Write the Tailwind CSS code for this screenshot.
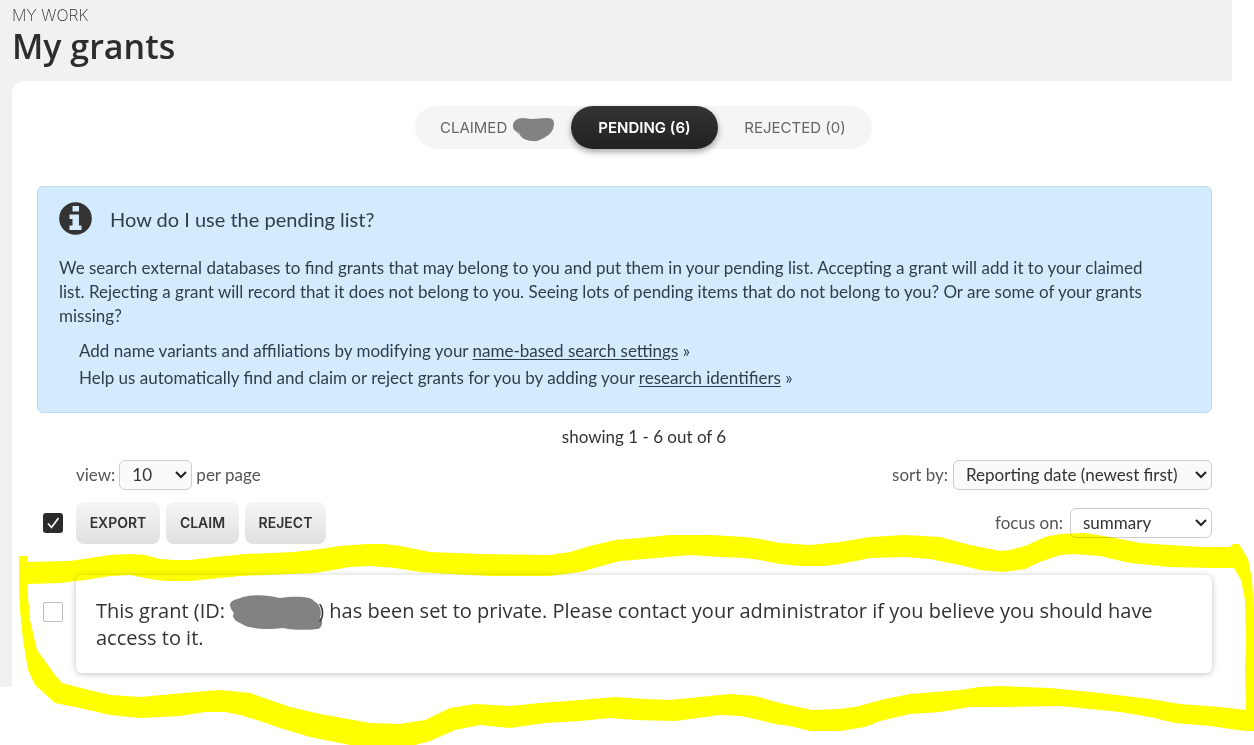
<!DOCTYPE html>
<html lang="en">
<head>
<meta charset="utf-8">
<meta name="viewport" content="width=device-width, initial-scale=1">
<title>My grants</title>
<script src="https://cdn.jsdelivr.net/npm/@tailwindcss/browser@4"></script>
</head>
<body class="bg-white text-[#333] font-['Lato',sans-serif] text-[17px] leading-6">
<div class="relative overflow-hidden pb-[58px]">
  <div class="mr-[22px] bg-[#f1f1f1]">
    <header class="h-[81px] pl-3 pt-1">
      <p class="font-['Inter',sans-serif] text-[16px] font-extralight leading-[22px]">MY WORK</p>
      <h1 class="font-['Open_Sans',sans-serif] text-[34px] font-semibold leading-[40px] text-[#2d2d2d]">My grants</h1>
    </header>

    <main class="ml-3 rounded-tl-xl bg-white pt-[25px] pr-5 pb-[14px] pl-[25px]">
      <nav class="flex justify-center pl-[38px]" aria-label="Grant lists">
        <div class="flex h-[43px] rounded-full bg-[#f5f5f5] font-['Inter',sans-serif] text-[15px]">
          <button type="button" class="flex w-[156px] items-center gap-[6px] pl-[25px] text-[#666]">CLAIMED
            <svg class="mt-1 h-6 w-[41px]" viewBox="0 0 41 24" fill="#828282" aria-hidden="true"><path d="M0 8C0 3 4 0 10 0L18 1L34 0C40 0 41 3 41 5C41 10 39 15 34 18C29 21 24 24 21 23C15 23 9 21 7 17L5 13L6 17L4 14C1 12 0 11 0 8Z"/></svg>
          </button>
          <button type="button" aria-current="page" class="w-[147px] rounded-full bg-linear-to-b from-[#333] to-[#222] text-center font-semibold text-white shadow-[0_3px_6px_rgba(0,0,0,0.35)]">PENDING (6)</button>
          <button type="button" class="w-[154px] text-center text-[#666]">REJECTED (0)</button>
        </div>
      </nav>

      <section class="mt-[37px] rounded-md border border-[#bddcf0] bg-[#d3ebfd] pt-[15px] pr-[60px] pb-[21px] pl-[21px] text-[#2f3e4b]">
        <div class="flex items-center gap-[18px]">
          <svg class="h-[33px] w-[33px]" viewBox="0 0 33 33" aria-hidden="true"><circle cx="16.500" cy="16.500" r="16.300" fill="#333"/><path fill="#d3ebfd" d="M13.500 4H20V9.500H13.500ZM10.500 12.500H20V23.500H22.500V28H10.500V23.500H13.500V17H10.500Z"/></svg>
          <h2 class="text-[20px] leading-8">How do I use the pending list?</h2>
        </div>
        <p class="mt-[21px]">We search external databases to find grants that may belong to you and put them in your pending list. Accepting a grant will add it to your claimed list. Rejecting a grant will record that it does not belong to you. Seeing lots of pending items that do not belong to you? Or are some of your grants missing?</p>
        <ul class="mt-[9px] pl-5 leading-[27px]">
          <li>Add name variants and affiliations by modifying your <a href="#" class="underline underline-offset-2">name-based search settings</a> »</li>
          <li>Help us automatically find and claim or reject grants for you by adding your <a href="#" class="underline underline-offset-2">research identifiers</a> »</li>
        </ul>
      </section>

      <p class="mt-3 pl-[39px] text-center">showing 1 - 6 out of 6</p>

      <div class="mt-[11px] flex h-[30px] items-center justify-between pl-[39px] text-[#555]">
        <div class="flex items-center gap-1">
          <label for="per-page">view:</label>
          <span class="relative">
            <select id="per-page" class="block h-[30px] w-[73px] appearance-none rounded-md border border-[#ccc] bg-[#fafafa] pl-3 text-[#333]"><option>10</option></select>
            <svg class="pointer-events-none absolute top-[11px] right-[5px] h-2 w-3" viewBox="0 0 12 8" fill="none" stroke="#222" stroke-width="2" aria-hidden="true"><path d="M1 1L6 6L11 1"/></svg>
          </span>
          <span>per page</span>
        </div>
        <div class="flex items-center gap-[5px]">
          <label for="sort">sort by:</label>
          <span class="relative">
            <select id="sort" class="block h-[30px] w-[259px] appearance-none rounded-md border border-[#ccc] bg-[#fafafa] pl-3 text-[#333]"><option>Reporting date (newest first)</option></select>
            <svg class="pointer-events-none absolute top-[11px] right-[5px] h-2 w-3" viewBox="0 0 12 8" fill="none" stroke="#222" stroke-width="2" aria-hidden="true"><path d="M1 1L6 6L11 1"/></svg>
          </span>
        </div>
      </div>

      <div class="mt-3 flex h-[42px] items-center justify-between pl-[6px] text-[#555]">
        <div class="flex items-center">
          <span class="relative mr-[13px]">
            <input type="checkbox" checked aria-label="Select all grants" class="block h-5 w-5 appearance-none rounded-[3px] bg-[#2b2b2b]">
            <svg class="pointer-events-none absolute inset-0 h-5 w-5" viewBox="0 0 20 20" fill="none" stroke="#fff" stroke-width="1.700" aria-hidden="true"><path d="M5 10.500L8.500 14.500L15.500 5"/></svg>
          </span>
          <div class="flex gap-[6px] font-['Inter',sans-serif] text-[14px] font-semibold text-[#333]">
            <button type="button" class="h-[42px] w-[84px] rounded-lg bg-linear-to-b from-[#f6f6f6] to-[#e0e0e0]">EXPORT</button>
            <button type="button" class="h-[42px] w-[73px] rounded-lg bg-linear-to-b from-[#f6f6f6] to-[#e0e0e0]">CLAIM</button>
            <button type="button" class="h-[42px] w-[81px] rounded-lg bg-linear-to-b from-[#f6f6f6] to-[#e0e0e0]">REJECT</button>
          </div>
        </div>
        <div class="flex items-center gap-[7px]">
          <label for="focus">focus on:</label>
          <span class="relative">
            <select id="focus" class="block h-[30px] w-[142px] appearance-none rounded-md border border-[#ccc] bg-white pl-3 text-[#333]"><option>summary</option></select>
            <svg class="pointer-events-none absolute top-[11px] right-[5px] h-2 w-3" viewBox="0 0 12 8" fill="none" stroke="#222" stroke-width="2" aria-hidden="true"><path d="M1 1L6 6L11 1"/></svg>
          </span>
        </div>
      </div>

      <div class="mt-[31px] flex gap-[13px] pl-[6px]">
        <input type="checkbox" aria-label="Select this grant" class="mt-[27px] block h-5 w-5 shrink-0 appearance-none rounded-[2px] border border-[#bbb] bg-white">
        <article class="grow rounded-md bg-white px-5 pt-[22px] pb-[22px] font-['Open_Sans',sans-serif] text-[20px] leading-[27px] shadow-[0_1px_6px_rgba(0,0,0,0.25)]">
          <p>This grant (ID: <svg class="-my-2 mr-[-4px] inline-block h-[35px] w-[92px] align-middle" viewBox="0 0 92 35" fill="#828282" aria-hidden="true"><path d="M0 9C1 5 8 4 13 2C25 -1 38 0 50 3C64 1 81 1 84 6C91 10 92 17 90 23C94 25 92 34 87 34C73 36 57 34 53 33C38 35 19 34 12 29C5 26 1 22 4 18C1 15 0 12 0 9Z"/></svg>) has been set to private. Please contact your administrator if you believe you should have access to it.</p>
        </article>
      </div>
    </main>
  </div>

  <!-- Highlighter stroke around the private grant -->
  <svg class="pointer-events-none absolute top-0 left-0 h-[745px] w-full mix-blend-multiply" viewBox="0 0 1254 745" preserveAspectRatio="none" fill="#ff0" fill-rule="evenodd" aria-hidden="true">
    <path d="M19 556L27 556L27 562L70 561L90 558L110 555L130 554L145 555L160 559L175 560L190 560L215 557L245 554L295 552L320 549L340 546L367 544L385 544L400 546L430 552L480 554L550 555L570 552L590 546L615 540L640 538L670 535L710 535L745 537L760 539L780 543L810 545L840 542L870 537L905 535L940 537L970 545L1000 551L1010 550L1025 546L1045 537L1060 534L1085 533L1110 537L1140 543L1170 545L1200 547L1230 547L1233 544L1239 544L1248 559L1252 580L1254 610L1254 731L1245 731L1210 726L1175 723L1150 717L1120 712L1060 706L1000 707L970 707L940 712L910 714L880 721L865 727L840 731L810 731L790 726L775 724L755 719L740 716L720 715L675 721L635 720L610 718L580 721L545 723L510 728L480 725L455 730L430 741L415 745L350 745L310 737L280 728L260 721L240 715L225 712L205 712L180 716L140 718L110 715L80 708L55 703L35 685L28 670L23 640L20 610L19 590Z
    M27 584L60 583L85 580L110 576L130 575L150 579L165 581L190 581L240 576L315 573L350 567L370 566L395 568L420 572L450 574L490 576L550 576L580 572L620 561L645 559L690 555L720 557L745 558L760 560L780 564L800 566L825 566L840 564L870 558L905 557L930 559L960 565L980 570L1003 572L1025 569L1040 562L1060 555L1072 554L1100 556L1130 563L1170 567L1210 568L1234 568L1241 580L1245 600L1246 640L1245 670L1246 710L1220 707L1180 704L1150 699L1100 693L1050 688L1000 686L980 687L960 690L910 694L885 699L870 703L855 707L840 709L812 710L780 703L755 696L730 694L690 698L670 700L645 699L615 697L580 700L540 703L510 706L475 704L450 708L425 720L400 724L370 723L320 714L290 707L250 693L220 690L195 692L140 697L110 695L85 689L62 683L55 675L37 650L30 620Z"/>
  </svg>
</div>
</body>
</html>
